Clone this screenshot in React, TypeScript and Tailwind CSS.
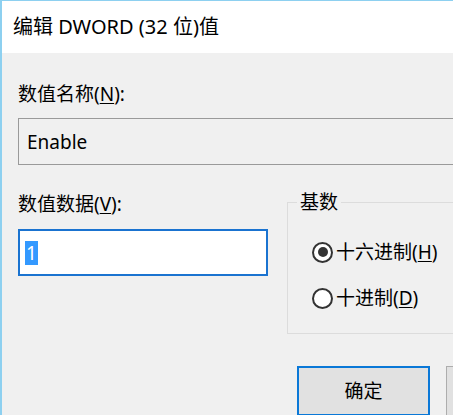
import React from "react";

function Radio({ checked, label, hotkey }: { checked?: boolean; label: string; hotkey: string }) {
  return (
    <div className="flex h-[24px] items-center gap-[3px]">
      <span className="flex h-[21px] w-[21px] items-center justify-center rounded-full border-2 border-[#333333] bg-white">
        {checked && <span className="h-[10px] w-[10px] rounded-full bg-[#333333]" />}
      </span>
      <span>
        {label}(<span className="underline underline-offset-2">{hotkey}</span>)
      </span>
    </div>
  );
}

export default function App() {
  return (
    <div
      className="h-[415px] w-[453px] overflow-hidden border-l-2 border-t border-[#8dd0f0] bg-[#f0f0f0] text-[19px] leading-[24px] text-black"
      style={{ fontFamily: '"Noto Sans", "Noto Sans CJK SC", sans-serif' }}
    >
      <div className="flex h-[52px] items-center bg-white pl-[11px] text-[20px]">
        编辑 DWORD (32 位)值
      </div>

      <div className="w-[620px] pl-[16px] pt-[29px]">
        <div>
          数值名称(<span className="underline underline-offset-2">N</span>):
        </div>
        <div className="mt-[12px] flex h-[47px] items-center border border-[#9a9a9a] bg-[#f0f0f0] pl-[8px]">
          Enable
        </div>

        <div className="mt-[27px] flex items-start gap-[19px]">
          <div className="w-[250px]">
            <div>
              数值数据(<span className="underline underline-offset-2">V</span>):
            </div>
            <div className="mt-[13px] flex h-[47px] items-center border-2 border-[#1a73d0] bg-white pl-[5px]">
              <span className="bg-[#3399ff] px-[1px] text-white">1</span>
            </div>
          </div>

          <fieldset className="-mt-[2px] flex-1 border border-[#dcdcdc]">
            <legend className="ml-[9px] px-[3px]">基数</legend>
            <div className="flex flex-col gap-[22px] pb-[23px] pl-[24px] pt-[26px]">
              <Radio checked label="十六进制" hotkey="H" />
              <Radio label="十进制" hotkey="D" />
            </div>
          </fieldset>
        </div>

        <div className="mt-[32px] flex gap-[16px] pl-[279px]">
          <button className="flex h-[50px] w-[133px] items-center justify-center border-2 border-[#0a78d7] bg-[#e1e1e1]">
            确定
          </button>
          <button
            aria-label="取消"
            className="h-[50px] w-[133px] border border-[#adadad] bg-[#e1e1e1]"
          />
        </div>
      </div>
    </div>
  );
}
